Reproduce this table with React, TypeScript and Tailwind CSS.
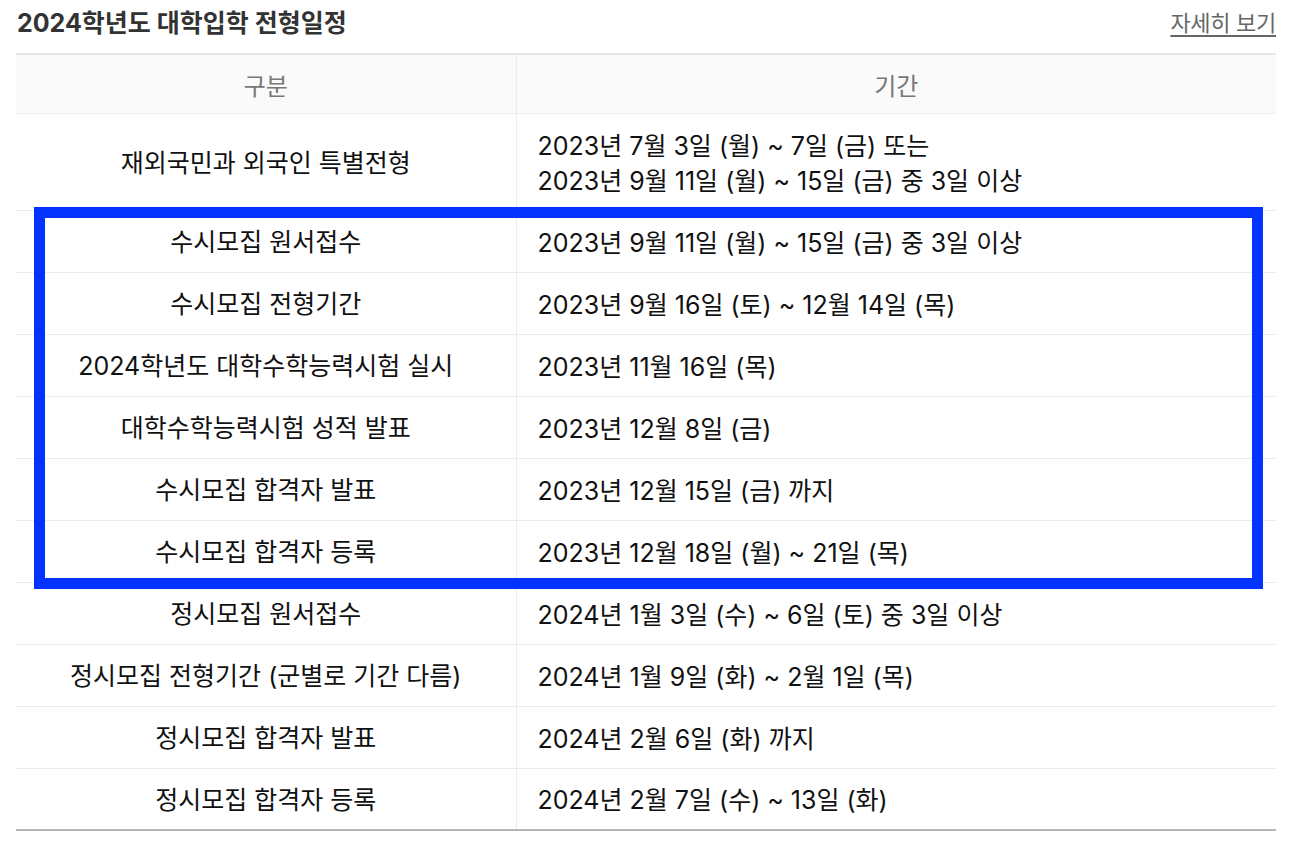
import React from "react";

type Row = { label: string; period: string[] };

const ROWS: Row[] = [
  { label: "재외국민과 외국인 특별전형", period: ["2023년 7월 3일 (월) ~ 7일 (금) 또는", "2023년 9월 11일 (월) ~ 15일 (금) 중 3일 이상"] },
  { label: "수시모집 원서접수", period: ["2023년 9월 11일 (월) ~ 15일 (금) 중 3일 이상"] },
  { label: "수시모집 전형기간", period: ["2023년 9월 16일 (토) ~ 12월 14일 (목)"] },
  { label: "2024학년도 대학수학능력시험 실시", period: ["2023년 11월 16일 (목)"] },
  { label: "대학수학능력시험 성적 발표", period: ["2023년 12월 8일 (금)"] },
  { label: "수시모집 합격자 발표", period: ["2023년 12월 15일 (금) 까지"] },
  { label: "수시모집 합격자 등록", period: ["2023년 12월 18일 (월) ~ 21일 (목)"] },
  { label: "정시모집 원서접수", period: ["2024년 1월 3일 (수) ~ 6일 (토) 중 3일 이상"] },
  { label: "정시모집 전형기간 (군별로 기간 다름)", period: ["2024년 1월 9일 (화) ~ 2월 1일 (목)"] },
  { label: "정시모집 합격자 발표", period: ["2024년 2월 6일 (화) 까지"] },
  { label: "정시모집 합격자 등록", period: ["2024년 2월 7일 (수) ~ 13일 (화)"] },
];

export default function App() {
  return (
    <div
      className="w-[1308px] h-[848px] bg-white pl-4 pr-8 text-[#111]"
      style={{ fontFamily: 'Inter, "Noto Sans CJK KR", sans-serif' }}
    >
      <div className="h-[53px] flex items-start justify-between pt-[6px]">
        <h2 className="text-[25px] leading-[35px] font-bold text-[#333] pl-[1px]">2024학년도 대학입학 전형일정</h2>
        <a className="text-[22px] leading-[35px] text-[#666] underline underline-offset-[4px] tracking-[-0.3px]">자세히 보기</a>
      </div>

      <div className="relative">
        <table className="w-full border-collapse border-t-2 border-t-[#e6e6e6] border-b-2 border-b-[#b5b5b5]">
          <thead>
            <tr className="bg-[#fafafa] h-[59px] border-b border-[#ececec]">
              <th className="w-[500px] font-normal text-[24px] text-[#777] border-r border-[#ececec] pt-[7px]">구분</th>
              <th className="font-normal text-[24px] text-[#777] pt-[7px]">기간</th>
            </tr>
          </thead>
          <tbody>
            {ROWS.map((r, i) => (
              <tr
                key={i}
                className={i === 0 ? "h-[97px] border-b border-[#ececec]" : i === ROWS.length - 1 ? "h-[62px]" : "h-[62px] border-b border-[#ececec]"}
              >
                <td className="text-center text-[25px] border-r border-[#ececec] pt-[4px]">{r.label}</td>
                <td className="pl-[21px] text-[25px] leading-[35px] pt-[4px]">
                  {r.period.map((p, j) => (
                    <div key={j}>{p}</div>
                  ))}
                </td>
              </tr>
            ))}
          </tbody>
        </table>
        {/* highlight annotation */}
        <div className="absolute left-[18px] top-[154px] w-[1229px] h-[382px] border-[11px] border-[#0433ff] pointer-events-none" />
      </div>
    </div>
  );
}
